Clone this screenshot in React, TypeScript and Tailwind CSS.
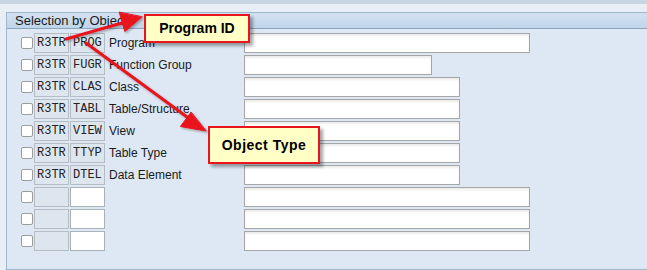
import React from 'react';

type Row = { type?: string; label?: string; width: number };

const rows: Row[] = [
  { type: 'PROG', label: 'Program', width: 286 },
  { type: 'FUGR', label: 'Function Group', width: 188 },
  { type: 'CLAS', label: 'Class', width: 216 },
  { type: 'TABL', label: 'Table/Structure', width: 216 },
  { type: 'VIEW', label: 'View', width: 216 },
  { type: 'TTYP', label: 'Table Type', width: 216 },
  { type: 'DTEL', label: 'Data Element', width: 216 },
  { width: 286 },
  { width: 286 },
  { width: 286 },
];

function ObjectRow({ row }: { row: Row }) {
  const filled = !!row.type;
  return (
    <div className="flex items-center h-[20px]">
      <div className="w-[12px] h-[12px] bg-white border border-[#9c9c9c] rounded-[2px] ml-[14px]" />
      <div className="ml-[1px] w-[35px] h-[20px] bg-[#dde6ef] border border-[#b4bcc4] text-[12px] leading-[18px] pl-[2px] text-[#222]" style={{ fontFamily: '"Liberation Mono", monospace' }}>
        {filled ? 'R3TR' : ''}
      </div>
      <div
        className={
          'ml-[1px] w-[35px] h-[20px] border text-[12px] leading-[18px] pl-[2px] text-[#222] ' +
          (filled ? 'bg-[#dde6ef] border-[#b4bcc4]' : 'bg-white border-[#a9b1b9]')
        }
        style={{ fontFamily: '"Liberation Mono", monospace' }}
      >
        {row.type ?? ''}
      </div>
      <div className="ml-[4px] w-[135px] text-[12px] text-[#1a1a1a]">{row.label ?? ''}</div>
      <div
        className="h-[20px] bg-white border border-[#a6a6a6] shadow-[inset_0_2px_2px_rgba(0,0,0,0.08)]"
        style={{ width: row.width }}
      />
    </div>
  );
}

export default function App() {
  return (
    <div className="relative w-[647px] h-[270px] overflow-hidden bg-[#e8eef5]" style={{ fontFamily: '"Liberation Sans", Arial, sans-serif' }}>
      <div className="h-[4px] bg-[#c9d5e1]" />
      <div className="h-[8px]" />
      <div className="ml-[6px] border-l border-t border-b border-[#9fb6cd] bg-[#dde8f4]">
        <div className="h-[16px] bg-gradient-to-b from-[#d3e2f1] to-[#bfd5ea] border-b border-[#8ca4bc] text-[13px] leading-[15px] pl-[8px] text-[#1a1a1a]">
          Selection by Objects
        </div>
        <div className="flex flex-col gap-[2px] pt-[4px] pb-[18px]">
          {rows.map((r, i) => (
            <ObjectRow key={i} row={r} />
          ))}
        </div>
      </div>

      {/* annotation arrows */}
      <svg className="absolute left-0 top-0 pointer-events-none" width="647" height="270">
        <defs>
          <filter id="sh" x="-10%" y="-10%" width="130%" height="130%">
            <feDropShadow dx="1.5" dy="1.5" stdDeviation="1" floodColor="#000" floodOpacity="0.3" />
          </filter>
        </defs>
        <g filter="url(#sh)" fill="#e8141e" stroke="#e8141e" strokeLinecap="round">
          <line x1="66" y1="39" x2="122" y2="23" strokeWidth="3" />
          <polygon points="142,17 124.8,31.6 119.3,12.4" strokeWidth="1" />
          <line x1="86" y1="43" x2="187" y2="117" strokeWidth="3" />
          <polygon points="206,131 180.4,126.5 190.9,112.3" strokeWidth="1" />
        </g>
      </svg>

      <div className="absolute left-[144px] top-[14px] w-[106px] h-[29px] border-2 border-[#e8141e] bg-[#ffffc6] shadow-[3px_3px_3px_rgba(0,0,0,0.35)] flex items-center justify-center font-bold text-[14px] text-black">
        Program ID
      </div>
      <div className="absolute left-[208px] top-[126px] w-[112px] h-[38px] border-2 border-[#e8141e] bg-[#ffffc6] shadow-[3px_3px_3px_rgba(0,0,0,0.35)] flex items-center justify-center font-bold text-[14px] tracking-[0.5px] text-black">
        Object Type
      </div>
    </div>
  );
}
